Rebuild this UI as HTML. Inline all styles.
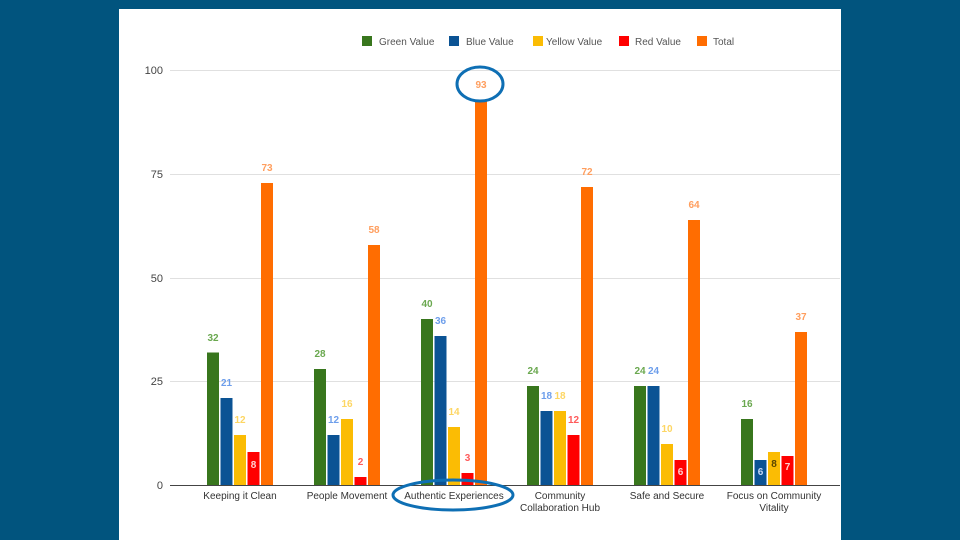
<!DOCTYPE html>
<html><head><meta charset="utf-8"><style>
html,body{margin:0;padding:0;background:#01547e;width:960px;height:540px;overflow:hidden}
svg{position:absolute;left:0;top:0}
</style></head><body>
<svg width="960" height="540" xmlns="http://www.w3.org/2000/svg" font-family="Liberation Sans, Arial, sans-serif">
<rect x="119" y="9" width="722" height="531" fill="#fff"/>
<g stroke="#e0e0e0" stroke-width="1">
<line x1="170" y1="70.5" x2="840" y2="70.5"/>
<line x1="170" y1="174.5" x2="840" y2="174.5"/>
<line x1="170" y1="278.5" x2="840" y2="278.5"/>
<line x1="170" y1="381.5" x2="840" y2="381.5"/>
</g>
<line x1="170" y1="485.5" x2="840" y2="485.5" stroke="#444" stroke-width="1"/>
<g font-size="11" fill="#444" text-anchor="end">
<text x="163" y="74">100</text><text x="163" y="178">75</text><text x="163" y="282">50</text><text x="163" y="385">25</text><text x="163" y="489">0</text>
</g>
<g font-size="10" fill="#555">
<rect x="362" y="36" width="10" height="10" fill="#38761d"/><text x="379" y="45">Green Value</text>
<rect x="449" y="36" width="10" height="10" fill="#0b5394"/><text x="466" y="45">Blue Value</text>
<rect x="533" y="36" width="10" height="10" fill="#fbbc04"/><text x="546" y="45">Yellow Value</text>
<rect x="619" y="36" width="10" height="10" fill="#ff0000"/><text x="635" y="45">Red Value</text>
<rect x="697" y="36" width="10" height="10" fill="#ff6d01"/><text x="713" y="45">Total</text>
</g>
<g>
<!-- group 1 -->
<rect x="207" y="352.5" width="12" height="132.5" fill="#38761d"/>
<rect x="220.5" y="398" width="12" height="87" fill="#0b5394"/>
<rect x="234" y="435" width="12" height="50" fill="#fbbc04"/>
<rect x="247.5" y="452" width="12" height="33" fill="#ff0000"/>
<rect x="261" y="183" width="12" height="302" fill="#ff6d01"/>
<!-- group 2 -->
<rect x="314" y="369" width="12" height="116" fill="#38761d"/>
<rect x="327.5" y="435" width="12" height="50" fill="#0b5394"/>
<rect x="341" y="419" width="12" height="66" fill="#fbbc04"/>
<rect x="354.5" y="477" width="12" height="8" fill="#ff0000"/>
<rect x="368" y="245" width="12" height="240" fill="#ff6d01"/>
<!-- group 3 -->
<rect x="421" y="319" width="12" height="166" fill="#38761d"/>
<rect x="434.5" y="336" width="12" height="149" fill="#0b5394"/>
<rect x="448" y="427" width="12" height="58" fill="#fbbc04"/>
<rect x="461.5" y="473" width="12" height="12" fill="#ff0000"/>
<rect x="475" y="100" width="12" height="385" fill="#ff6d01"/>
<!-- group 4 -->
<rect x="527" y="386" width="12" height="99" fill="#38761d"/>
<rect x="540.5" y="411" width="12" height="74" fill="#0b5394"/>
<rect x="554" y="411" width="12" height="74" fill="#fbbc04"/>
<rect x="567.5" y="435" width="12" height="50" fill="#ff0000"/>
<rect x="581" y="187" width="12" height="298" fill="#ff6d01"/>
<!-- group 5 -->
<rect x="634" y="386" width="12" height="99" fill="#38761d"/>
<rect x="647.5" y="386" width="12" height="99" fill="#0b5394"/>
<rect x="661" y="444" width="12" height="41" fill="#fbbc04"/>
<rect x="674.5" y="460" width="12" height="25" fill="#ff0000"/>
<rect x="688" y="220" width="12" height="265" fill="#ff6d01"/>
<!-- group 6 -->
<rect x="741" y="419" width="12" height="66" fill="#38761d"/>
<rect x="754.5" y="460" width="12" height="25" fill="#0b5394"/>
<rect x="768" y="452" width="12" height="33" fill="#fbbc04"/>
<rect x="781.5" y="456" width="12" height="29" fill="#ff0000"/>
<rect x="795" y="332" width="12" height="153" fill="#ff6d01"/>
</g>
<g font-size="10" font-weight="bold" text-anchor="middle">
<g fill="#6aa84f">
<text x="213" y="341">32</text><text x="320" y="357">28</text><text x="427" y="307">40</text><text x="533" y="374">24</text><text x="640" y="374">24</text><text x="747" y="407">16</text>
</g>
<g fill="#6d9eeb">
<text x="226.5" y="386">21</text><text x="333.5" y="423">12</text><text x="440.5" y="324">36</text><text x="546.5" y="399">18</text><text x="653.5" y="374">24</text>
</g>
<g fill="#fdd663">
<text x="240" y="423">12</text><text x="347" y="407">16</text><text x="454" y="415">14</text><text x="560" y="399">18</text><text x="667" y="432">10</text>
</g>
<g fill="#ff5a5a">
<text x="360.5" y="465">2</text><text x="467.5" y="461">3</text><text x="573.5" y="423">12</text>
</g>
<g fill="#ff9e5e">
<text x="267" y="171">73</text><text x="374" y="233">58</text><text x="481" y="88">93</text><text x="587" y="175">72</text><text x="694" y="208">64</text><text x="801" y="320">37</text>
</g>
<text x="253.5" y="468" fill="#ffd0d0">8</text>
<text x="680.5" y="475" fill="#ffd0d0">6</text>
<text x="760.5" y="475" fill="#c9daf8">6</text>
<text x="774" y="467" fill="#5a4500">8</text>
<text x="787.5" y="470" fill="#ffd0d0">7</text>
</g>
<g font-size="10" fill="#333" text-anchor="middle">
<text x="240" y="499">Keeping it Clean</text>
<text x="347" y="499">People Movement</text>
<text x="454" y="499">Authentic Experiences</text>
<text x="560" y="499">Community</text><text x="560" y="511">Collaboration Hub</text>
<text x="667" y="499">Safe and Secure</text>
<text x="774" y="499">Focus on Community</text><text x="774" y="511">Vitality</text>
</g>
<ellipse cx="480" cy="84" rx="23" ry="17" fill="none" stroke="#0e6fb4" stroke-width="3"/>
<ellipse cx="453" cy="495" rx="60" ry="15" fill="none" stroke="#0e6fb4" stroke-width="3"/>
</svg>
</body></html>
